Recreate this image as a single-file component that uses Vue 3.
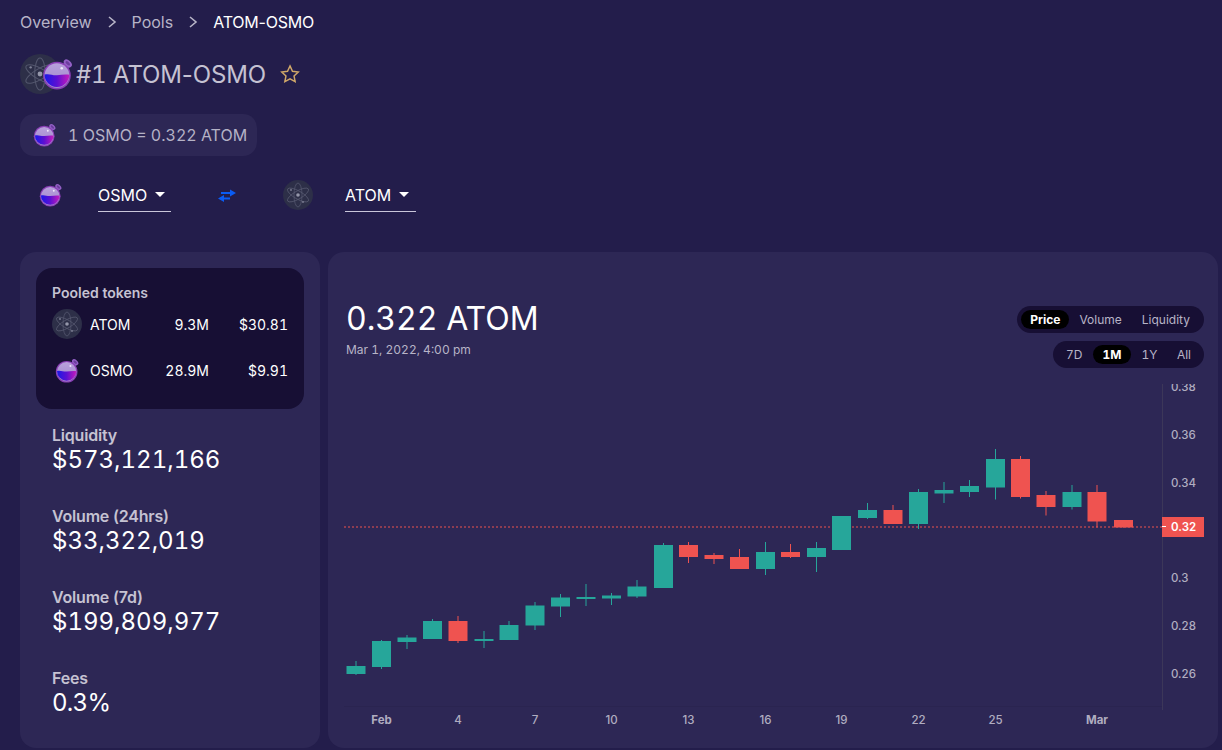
<script setup>
const candles = [
  [356, 666, 674, 661, 675, 'g'], [381.5, 641, 667, 640, 669, 'g'], [407, 637.5, 642, 635, 649, 'g'],
  [432.5, 621, 639, 619, 639, 'g'], [458, 621, 641, 616, 643, 'r'], [484, 639, 641, 631, 648, 'g'],
  [509, 625, 640, 621, 640, 'g'], [535, 605.5, 625.5, 602, 630, 'g'], [560.5, 597.5, 606.5, 594, 617, 'g'],
  [586, 597, 599, 584, 606, 'g'], [611.5, 595.5, 598.5, 593, 605, 'g'], [637, 586.5, 596.5, 580, 598, 'g'],
  [663.5, 545, 588, 543, 588, 'g'], [688.5, 545, 557, 542, 563, 'r'], [714, 555, 559, 553, 564, 'r'],
  [739.5, 557, 569, 549, 569, 'r'], [765.5, 552, 569, 542, 575, 'g'], [790.5, 552, 557, 544, 558, 'r'],
  [816.5, 548, 557, 542, 572, 'g'], [841.5, 516, 550, 516, 550, 'g'], [867.5, 510, 518, 503, 519, 'g'],
  [893, 510, 524, 505, 524, 'r'], [918.5, 492, 524, 489, 529, 'g'], [944, 490, 493.5, 482, 503, 'g'],
  [969.5, 486, 492, 480, 497, 'g'], [995.5, 459, 487.5, 449, 499.5, 'g'], [1020.5, 459, 497, 456, 498.5, 'r'],
  [1046, 495, 507, 491, 515.5, 'r'], [1072, 492, 507, 485, 509.5, 'g'], [1097, 492, 521.5, 485, 527.5, 'r'],
  [1123.5, 520, 527.5, 520, 527.5, 'r']
]
const priceTicks = [['0.38', 387], ['0.36', 435], ['0.34', 482.5], ['0.3', 577.5], ['0.28', 625.5], ['0.26', 674]]
const dateTicks = [['Feb', 381.5, true], ['4', 458], ['7', 535], ['10', 611.5], ['13', 688.5], ['16', 765.5], ['19', 841.5], ['22', 918.5], ['25', 995.5], ['Mar', 1097, true]]
const tokens = [
  { icon: '#atom', cls: '', name: 'ATOM', amount: '9.3M', price: '$30.81' },
  { icon: '#osmo', cls: 'small', name: 'OSMO', amount: '28.9M', price: '$9.91' }
]
const stats = [
  { label: 'Liquidity', value: '$573,121,166' },
  { label: 'Volume (24hrs)', value: '$33,322,019' },
  { label: 'Volume (7d)', value: '$199,809,977' },
  { label: 'Fees', value: '0.3%' }
]
</script>

<template>
  <div class="page">
    <svg class="defs" width="0" height="0">
      <defs>
        <linearGradient id="liquid" x1="0" y1="0" x2="1" y2="0">
          <stop offset="0" stop-color="#1a18e6" />
          <stop offset="0.5" stop-color="#5c10d2" />
          <stop offset="1" stop-color="#c41cbc" />
        </linearGradient>
        <linearGradient id="glass" x1="0" y1="0" x2="0" y2="1">
          <stop offset="0" stop-color="#b8a0dc" />
          <stop offset="1" stop-color="#a088cc" />
        </linearGradient>
        <symbol id="atom" viewBox="0 0 30 30">
          <circle cx="15" cy="15" r="15" fill="#2d2f48" />
          <g fill="none" stroke="#54576e" stroke-width="0.8">
            <ellipse cx="15" cy="15" rx="4" ry="12" />
            <ellipse cx="15" cy="15" rx="4" ry="12" transform="rotate(60 15 15)" />
            <ellipse cx="15" cy="15" rx="4" ry="12" transform="rotate(120 15 15)" />
          </g>
          <circle cx="15" cy="15" r="1.8" fill="#9597aa" />
          <circle cx="8" cy="10" r="0.9" fill="#7f8196" />
          <circle cx="20" cy="22" r="0.9" fill="#7f8196" />
        </symbol>
        <symbol id="osmo" viewBox="0 0 30 30">
          <path d="M19 6 L22 3.500 L26.500 8 L23.500 11 Z" fill="#7a48ad" />
          <ellipse cx="24.200" cy="5" rx="4.400" ry="2.800" transform="rotate(42 24.200 5)" fill="#9360c6" />
          <ellipse cx="24.200" cy="5" rx="2.600" ry="1.300" transform="rotate(42 24.200 5)" fill="#6c3d9e" />
          <circle cx="14" cy="16.500" r="13" fill="#8a3fb6" />
          <circle cx="14" cy="16.500" r="11.600" fill="url(#glass)" />
          <path d="M2.400 15.500 C7 14.500 10 16.500 14 16.200 C18 15.900 22 15 25.600 15.800 A11.600 11.600 0 0 1 2.400 15.500 Z" fill="url(#liquid)" />
          <circle cx="18.500" cy="9.600" r="1.200" fill="#efe6fb" />
        </symbol>
      </defs>
    </svg>

    <nav class="crumbs">
      <span>Overview</span>
      <svg class="chev" viewBox="0 0 10 14"><path d="M2 2l6 5-6 5" /></svg>
      <span>Pools</span>
      <svg class="chev" viewBox="0 0 10 14"><path d="M2 2l6 5-6 5" /></svg>
      <span class="current">ATOM-OSMO</span>
    </nav>

    <div class="title-row">
      <div class="pair">
        <svg class="pair-atom"><use href="#atom" /></svg>
        <svg class="pair-osmo"><use href="#osmo" /></svg>
      </div>
      <h1><span class="tab">#1</span> ATOM-OSMO</h1>
      <svg class="star" viewBox="0 0 24 24"><path d="M12 3.200l2.700 5.800 6.300.8-4.600 4.300 1.200 6.300-5.600-3.100-5.600 3.100 1.200-6.300L3 9.800l6.300-.8z" /></svg>
    </div>

    <div class="rate">
      <svg class="rate-icon"><use href="#osmo" /></svg>
      <span>1 OSMO = 0.322 ATOM</span>
    </div>

    <div class="selectors">
      <svg class="sel-osmo"><use href="#osmo" /></svg>
      <div class="select first"><span>OSMO</span><i class="caret"></i></div>
      <svg class="swap" viewBox="0 0 18 13">
        <path d="M3 3h9V0.500L18 4l-6 3.500V5H3z M12 10.500H6V13L0 9.500L6 6v2.500h6z" fill="#0a5cf5" />
      </svg>
      <svg class="sel-atom"><use href="#atom" /></svg>
      <div class="select"><span>ATOM</span><i class="caret"></i></div>
    </div>

    <div class="panels">
      <aside class="side card">
        <div class="pooled">
          <div class="pooled-title">Pooled tokens</div>
          <div v-for="t in tokens" :key="t.name" class="token">
            <span class="token-slot"><svg class="token-icon" :class="t.cls"><use :href="t.icon" /></svg></span>
            <span>{{ t.name }}</span>
            <span class="num">{{ t.amount }}</span>
            <span class="num">{{ t.price }}</span>
          </div>
        </div>
        <div v-for="s in stats" :key="s.label" class="stat">
          <div class="stat-label">{{ s.label }}</div>
          <div class="stat-value">{{ s.value }}</div>
        </div>
      </aside>

      <section class="main card">
        <div class="head">
          <div>
            <div class="price">0.322 ATOM</div>
            <div class="date">Mar 1, 2022, 4:00 pm</div>
          </div>
          <div class="toggles">
            <div class="toggle">
              <span class="on">Price</span><span>Volume</span><span>Liquidity</span>
            </div>
            <div class="toggle range">
              <span>7D</span><span class="on">1M</span><span>1Y</span><span>All</span>
            </div>
          </div>
        </div>
        <svg class="chart" viewBox="328 384 890 364" width="890" height="364">
          <line x1="344" x2="1162" y1="706.500" y2="706.500" stroke="#2a2450" />
          <line x1="1162.500" x2="1162.500" y1="384" y2="710" stroke="#3c3759" />
          <line x1="344" x2="1162" y1="527" y2="527" stroke="#ad4450" stroke-width="1.500" stroke-dasharray="2 2" />
          <g v-for="c in candles" :key="c[0]" :fill="c[5] === 'g' ? '#26a69a' : '#ef5350'">
            <rect :x="c[0] - 0.5" :y="c[3]" width="1" :height="c[4] - c[3]" />
            <rect :x="c[0] - 9.500" :y="c[1]" width="19" :height="c[2] - c[1]" />
          </g>
          <rect x="1162" y="517" width="42" height="20" fill="#ef5350" />
          <rect x="1162" y="526" width="4" height="1" fill="#fff" />
          <text x="1171" y="531" class="tag">0.32</text>
          <text v-for="t in priceTicks" :key="t[0]" x="1171" :y="t[1] + 4" class="tick">{{ t[0] }}</text>
          <text v-for="t in dateTicks" :key="t[0]" :x="t[1]" y="724" class="tick date-tick" :class="{ bold: t[2] }">{{ t[0] }}</text>
        </svg>
      </section>
    </div>
  </div>
</template>

<style>
html, body { background: #231d4b; }
</style>

<style scoped>
.page {
  height: 750px;
  box-sizing: border-box;
  padding: 0 4px 0 20px;
  overflow: hidden;
  background: #231d4b;
  color: #fff;
  font-family: Inter, "Liberation Sans", sans-serif;
}
.defs { display: block; }
.crumbs {
  display: flex;
  align-items: center;
  height: 22px;
  margin-top: 11px;
  font-size: 16px;
  color: #b7b4c7;
}
.chev { width: 10px; height: 14px; margin: 0 15px; fill: none; stroke: #b7b4c7; stroke-width: 1.600; }
.current { color: #fff; letter-spacing: -0.2px; }
.title-row { display: flex; align-items: center; height: 40px; margin-top: 21px; }
.pair { display: flex; width: 56px; height: 40px; align-items: center; }
.pair svg { display: block; }
.pair-atom { width: 40px; height: 40px; flex: none; }
.pair-osmo { width: 32px; height: 32px; flex: none; margin-left: -18px; }
h1 { margin: 0; font-size: 24px; font-weight: 400; color: #c5c2d2; letter-spacing: -0.15px; }
.tab { font-variant-numeric: tabular-nums; }
.star { width: 22px; height: 22px; margin-left: 13px; fill: none; stroke: #cfa769; stroke-width: 1.600; }
.rate {
  display: inline-flex;
  align-items: center;
  height: 42px;
  width: 237px;
  box-sizing: border-box;
  margin-top: 20px;
  padding-left: 13px;
  border-radius: 14px;
  background: #2d2755;
  font-size: 16px;
  color: #b5b2c6;
  font-variant-numeric: tabular-nums;
}
.rate-icon { width: 24px; height: 24px; margin-right: 11px; }
.selectors { display: flex; align-items: center; height: 40px; margin-top: 19px; }
.selectors svg { flex: none; }
.sel-osmo { width: 24px; height: 24px; margin-left: 19px; }
.sel-atom { width: 30px; height: 30px; margin-left: 47px; }
.select {
  display: flex;
  align-items: center;
  gap: 8px;
  height: 33px;
  margin-left: 32px;
  padding-right: 7px;
  border-bottom: 1px solid #c9c6da;
  box-sizing: border-box;
  font-size: 16px;
}
.select.first { margin-left: 35px; width: 73px; }
.caret { width: 0; height: 0; border: 5px solid transparent; border-top-color: #fff; border-bottom: 0; }
.swap { width: 18px; height: 13px; margin-left: 47px; }
.panels { display: flex; gap: 8px; margin-top: 37px; }
.card { background: #2d2755; border-radius: 16px; height: 496px; box-sizing: border-box; }
.side { width: 300px; padding: 16px; flex: none; }
.pooled {
  height: 141px;
  box-sizing: border-box;
  padding: 16px 16px 0 16px;
  margin-bottom: 16px;
  border-radius: 16px;
  background: #170f34;
  font-variant-numeric: tabular-nums;
}
.pooled-title { font-size: 14px; font-weight: 600; line-height: 18px; color: #c5c2d2; }
.token {
  display: grid;
  grid-template-columns: 38px 1fr 60px 79px;
  align-items: center;
  height: 30px;
  margin-bottom: 16px;
  font-size: 14px;
}
.pooled-title + .token { margin-top: 7px; }
.token-slot { display: flex; justify-content: center; width: 30px; }
.token-icon { width: 30px; height: 30px; display: block; }
.token-icon.small { width: 25px; height: 25px; }
.num { text-align: right; }
.stat { padding-left: 16px; height: 81px; }
.stat-label { font-size: 16px; font-weight: 600; line-height: 20px; color: #c5c2d2; letter-spacing: -0.2px; }
.stat-value { font-size: 24px; line-height: 28px; margin-top: 1px; font-variant-numeric: tabular-nums; }
.stat:last-child .stat-value { letter-spacing: -0.7px; }
.main { flex: 1; padding-top: 48px; }
.head {
  display: flex;
  justify-content: space-between;
  align-items: flex-start;
  height: 84px;
  padding: 0 14px 0 18px;
  font-variant-numeric: tabular-nums;
}
.price { font-size: 32px; line-height: 38px; }
.date { font-size: 12px; line-height: 16px; margin-top: 4px; color: #b7b4c7; }
.toggles { display: flex; flex-direction: column; align-items: flex-end; gap: 8px; margin-top: 6px; }
.toggle {
  display: flex;
  align-items: center;
  height: 27px;
  padding: 0 4px;
  border-radius: 14px;
  background: #170f34;
  font-size: 12px;
  color: #b7b4c7;
}
.toggle span { padding: 0 10px; line-height: 19px; border-radius: 10px; }
.toggle span.on { padding: 0 9px; }
.toggle.range { gap: 1.500px; }
.toggle.range span { padding: 0 9px; }
.toggle.range span.on { padding: 0 9.500px; }
.toggle .on { background: #000; color: #fff; font-weight: 700; }
.chart { display: block; }
.tick { font-size: 11.500px; font-weight: 500; fill: #b0adc0; font-family: Inter, "Liberation Sans", sans-serif; }
.date-tick { text-anchor: middle; }
.bold { font-weight: 700; }
.tag { font-size: 11.500px; font-weight: 600; fill: #fff; font-family: Inter, "Liberation Sans", sans-serif; }
</style>
